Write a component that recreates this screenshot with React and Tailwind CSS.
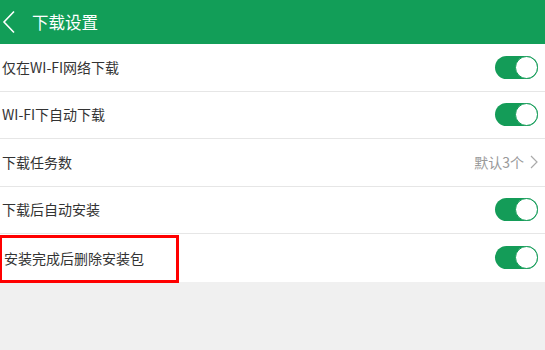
const rows = [
  { label: '仅在WI-FI网络下载', type: 'toggle' },
  { label: 'WI-FI下自动下载', type: 'toggle' },
  { label: '下载任务数', type: 'link', value: '默认3个' },
  { label: '下载后自动安装', type: 'toggle' },
  { label: '安装完成后删除安装包', type: 'toggle', marked: true },
]

function Toggle() {
  return (
    <div className="relative w-[43px] h-[23px] rounded-full bg-[#149c58]">
      <div className="absolute right-0 top-0 w-[23px] h-[23px] rounded-full bg-white border border-[#149c58]" />
    </div>
  )
}

export default function App() {
  return (
    <div
      className="w-[545px] h-[350px] bg-[#f0f0f0] overflow-hidden"
      style={{ fontFamily: '"Noto Sans CJK SC", "Liberation Sans", sans-serif' }}
    >
      <div className="h-[44px] bg-[#129e58] flex items-center text-white">
        <svg width="16" height="24" viewBox="0 0 16 24" className="ml-[1px]">
          <path d="M13 1.5 L3 12 L13 22.5" fill="none" stroke="white" strokeWidth="1.6" />
        </svg>
        <span className="ml-[15px] text-[16.5px]">下载设置</span>
      </div>
      <div className="bg-white">
        {rows.map((row, i) => (
          <div
            key={row.label}
            className={`h-[47.5px] flex items-center justify-between pr-[7px] ${
              i < rows.length - 1 ? 'border-b border-[#e6e6e6]' : ''
            }`}
          >
            <div
              className={`h-full flex items-center pl-[2px] text-[14px] text-[#333] ${
                row.marked ? 'w-[180px] border-[3px] border-[#ff0000] -ml-[1px] mt-[2px]' : ''
              }`}
            >
              {row.label}
            </div>
            {row.type === 'toggle' ? (
              <Toggle />
            ) : (
              <div className="flex items-center gap-[6px] text-[14px] text-[#999]">
                <span>{row.value}</span>
                <svg width="8" height="14" viewBox="0 0 8 14">
                  <path d="M1 1 L7 7 L1 13" fill="none" stroke="#aaa" strokeWidth="1.2" />
                </svg>
              </div>
            )}
          </div>
        ))}
      </div>
    </div>
  )
}
